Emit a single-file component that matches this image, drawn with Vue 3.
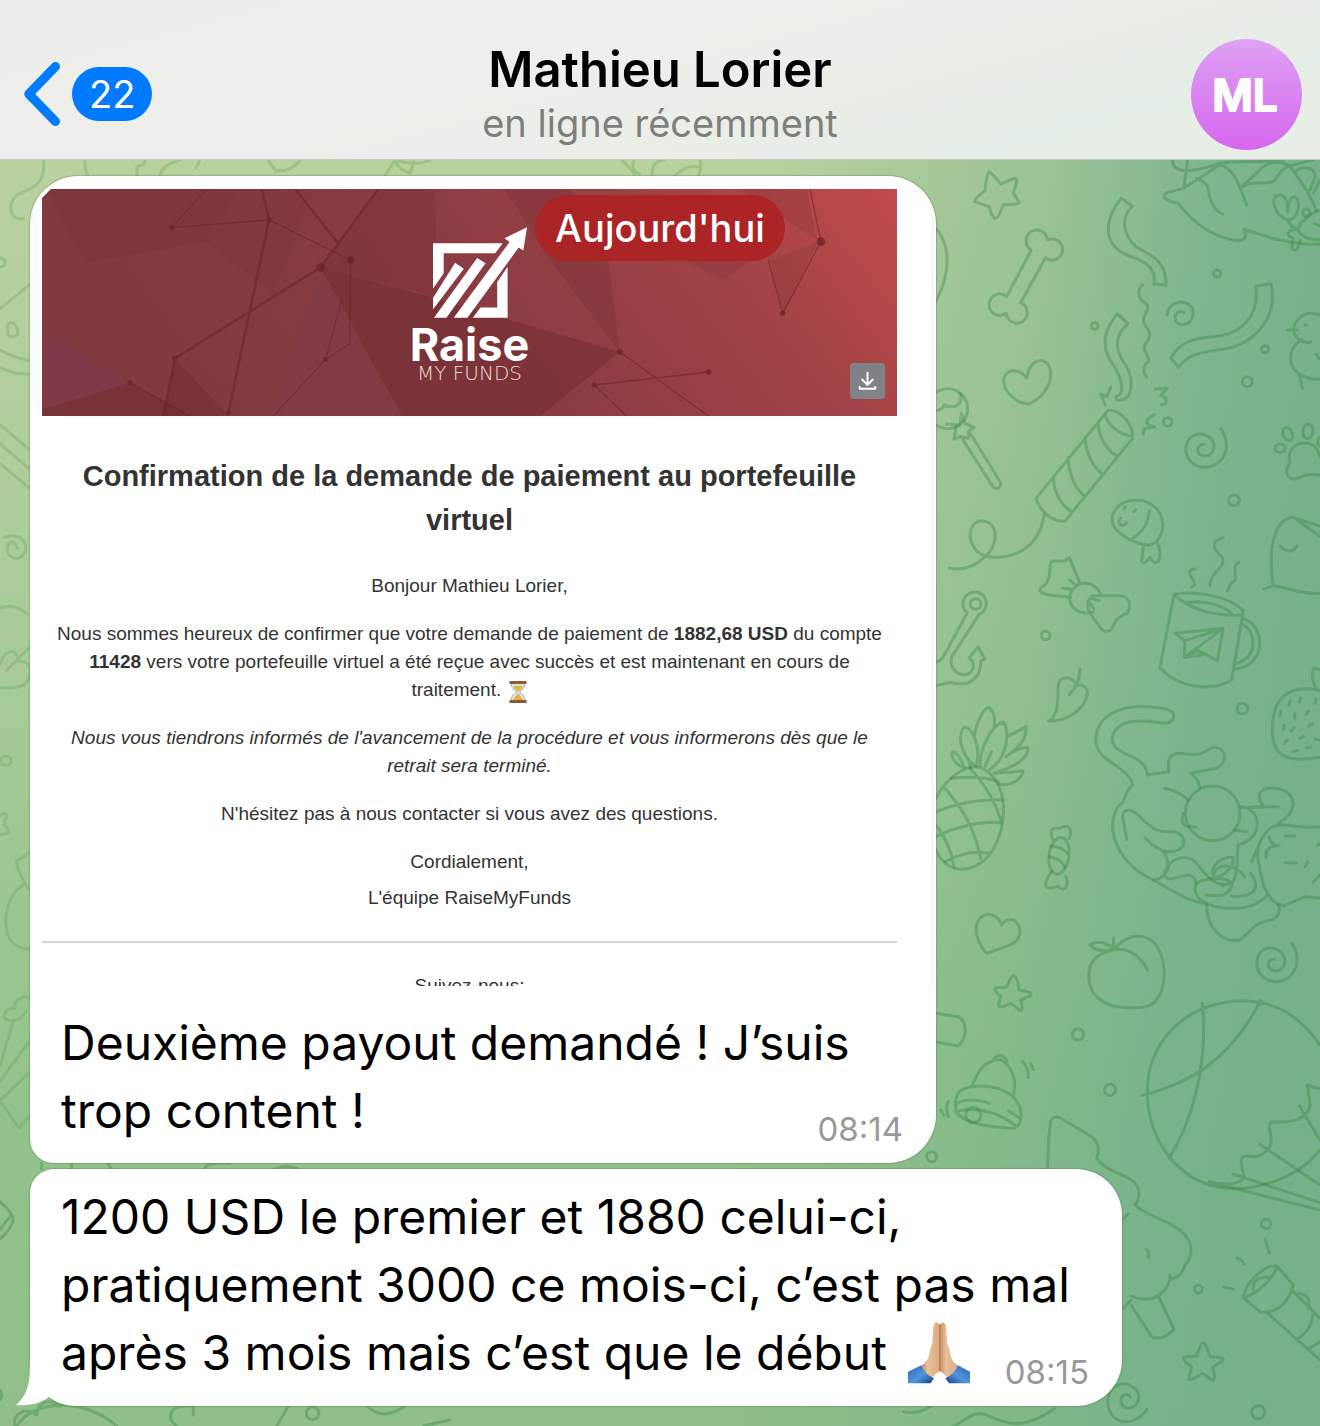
<script setup>
const contact = { name: 'Mathieu Lorier', status: 'en ligne récemment', initials: 'ML', unread: 22 }

const first = { lines: ['Deuxième payout demandé ! J’suis', 'trop content !'], time: '08:14' }
const second = {
  lines: ['1200 USD le premier et 1880 celui-ci,', 'pratiquement 3000 ce mois-ci, c’est pas mal', 'après 3 mois mais c’est que le début'],
  time: '08:15',
}

const seeds = [
  [1078, 430, 20], [1110, 420, 20], [1156, 424, 20], [1051, 460, 10], [1094, 468, 5], [1132, 458, 40],
  [1061, 503, 20], [1088, 508, 45], [1142, 496, 60], [1068, 545, 40], [1115, 532, 65], [1161, 538, 100],
  [1095, 573, 75], [1137, 562, 75],
]
</script>

<template>
  <div class="app">
    <header class="top">
      <button class="back" type="button" aria-label="Retour, 22 messages non lus">
        <svg class="chevron" viewBox="0 0 36 64" aria-hidden="true"><path d="M31.500 4.500 L4.800 32 L31.500 59.500" /></svg>
        <span class="unread">{{ contact.unread }}</span>
      </button>
      <div class="who">
        <h1>{{ contact.name }}</h1>
        <p>{{ contact.status }}</p>
      </div>
      <svg class="avatar" viewBox="0 0 111 111" role="img" aria-label="Mathieu Lorier">
        <defs>
          <linearGradient id="pink" x1="0" y1="0" x2="0" y2="1">
            <stop offset="0" stop-color="#dfa2f4" /><stop offset="1" stop-color="#d567ed" />
          </linearGradient>
        </defs>
        <circle cx="55.500" cy="55.500" r="55.500" fill="url(#pink)" />
        <text x="54" y="72" text-anchor="middle">{{ contact.initials }}</text>
      </svg>
    </header>

    <main class="chat">
      <svg class="wallpaper" viewBox="0 160 1320 1266" preserveAspectRatio="xMaxYMin slice" aria-hidden="true">
        <g transform="translate(930 160) scale(.33333)">
          <path d="M178 35 Q190 45 212 72 Q235 60 256 55 Q266 58 250 98 L268 128 Q262 134 220 134 Q205 176 195 176 Q185 170 178 140 L134 125 Q132 115 165 92 Q168 50 178 35Z" />
          <path d="M304 270 A32 32 0 1 1 352 240 A32 32 0 1 1 346 294 L272 428 A32 32 0 1 1 228 460 A32 32 0 1 1 230 410 Z" />
          <path d="M573 115 L607 138 C570 175 580 225 618 260 C660 285 710 300 708 376 L672 372 C680 325 645 305 610 292 C520 265 515 190 573 115Z" />
          <path d="M638 374 C620 390 625 415 640 425 C670 440 640 460 640 480 C640 500 670 510 655 540 C625 570 660 580 655 605 C635 620 640 640 650 652" />
          <path d="M562 462 L594 490 C560 520 550 560 580 605 C615 650 610 720 570 720 Q555 720 558 710 C590 700 575 650 540 600 C515 555 520 510 562 462Z" />
          <path d="M711 465 C715 430 750 418 775 432 C800 450 790 492 758 494 C730 492 728 460 750 455 Q757 453 762 458" />
          <path d="M977 378 L1023 371 C1045 460 985 550 880 568 C820 575 775 580 746 622 L722 595 C750 545 790 535 850 530 C930 525 990 470 977 378Z" />
          <circle cx="861" cy="340" r="11" /><circle cx="494" cy="498" r="10" /><circle cx="1005" cy="568" r="11" />
          <circle cx="952" cy="665" r="15" /><circle cx="713" cy="786" r="13" /><circle cx="912" cy="1021" r="16" />
          <path d="M290 655 C300 590 350 590 360 625 C370 670 340 710 300 731 C260 735 215 690 222 655 C230 625 270 625 290 655Z" />
          <circle cx="53" cy="746" r="60" />
          <path d="M18 752 Q40 750 42 735 C80 750 100 730 90 700 M98 838 L190 982 Q205 995 213 970 L122 822 M78 800 L72 838 L92 830 L115 835 L115 815 L132 802 L105 790 L94 760 L90 795 L50 792" />
          <path d="M535 750 L318 1015 C330 1055 365 1085 404 1084 L608 835 C610 790 570 750 535 750Z M524 760 C535 800 570 825 608 828 M505 788 C505 830 530 870 558 886 M466 832 C466 880 490 920 516 942 M415 892 C415 940 435 985 462 1008 M370 952 C372 1000 395 1035 424 1055" />
          <path d="M342 1065 C330 1160 250 1205 165 1188 C110 1170 105 1085 155 1082 C210 1085 205 1160 165 1190 C130 1225 95 1232 58 1224" />
          <path d="M526 735 L512 702 L530 710 L542 682 M675 687 L712 685 L692 706 Q712 712 708 730 L694 735 M674 764 Q640 780 655 795 L674 800 L642 806 L640 822" />
          <path d="M872 805 C910 860 880 920 825 922 C770 922 750 860 785 830 C815 810 855 830 852 865 C845 895 805 895 803 868 Q808 850 822 853" />
          <path d="M1170 465 C1120 445 1085 490 1092 515 C1095 535 1120 552 1142 546 M1115 540 C1060 570 1070 660 1170 658 M1072 510 h30 M1110 648 L1117 685 M1158 582 L1170 598 M1125 496 l3 0" />
          <ellipse cx="1073" cy="822" rx="14" ry="20" transform="rotate(-25 1073 822)" />
          <ellipse cx="1134" cy="814" rx="15" ry="22" transform="rotate(10 1134 814)" />
          <ellipse cx="1050" cy="865" rx="15" ry="13" />
          <path d="M1170 832 Q1155 845 1170 858 M1170 890 C1160 870 1165 860 1135 850 C1100 845 1070 865 1080 908 C1055 940 1080 968 1110 953 C1130 938 1150 945 1170 945" />
          <path d="M662 1155 C720 1130 710 1025 620 1020 C550 1022 530 1080 560 1110 C590 1140 630 1155 662 1155 M658 1052 C655 1095 635 1120 600 1140 M640 1160 L635 1205 Q645 1215 660 1192 Q672 1215 685 1203 C695 1180 688 1160 682 1147 M572 1074 a12 12 0 1 0 18 14 M582 1045 l4 -5 M612 1055 l5 -6" />
          <path d="M1030 1275 C1010 1150 1040 1075 1090 1072 L1170 1098 M1095 1075 L1170 1130 M1050 1158 Q1080 1190 1102 1157 M1002 1287 C1060 1260 1070 1305 1170 1300" />
          <path d="M868 15 L800 60 L760 85 L710 98 C690 110 710 125 745 130 C790 190 860 240 930 242 Q955 235 942 208 C1010 230 1080 255 1170 253 M868 15 C910 20 930 80 950 135 M800 55 C840 70 835 90 838 110 Q850 150 878 163 M728 0 C725 35 770 45 868 10 C900 0 1000 10 1060 0 M773 0 L762 80 M930 85 L1000 20 C1030 0 1060 5 1080 20 C1110 60 1140 100 1158 150 M930 85 C960 60 1000 75 1030 65 C1050 40 1060 20 1080 18 C1110 10 1140 0 1150 0 M1095 35 C1130 10 1165 30 1152 60 L1140 90 M1150 100 L1170 60" />
          <path d="M1073 155 C1075 95 1110 100 1105 145 Q1095 180 1073 180 C1030 165 1020 110 1045 105 Q1075 105 1073 155 M1170 150 C1130 165 1110 190 1103 210 Q1120 240 1170 240 M1075 185 L1085 200 L1103 205 L1080 213 Q1065 225 1090 235 L1085 265 Q1095 278 1105 260 L1110 240 M1153 190 L1170 198" />
          <circle cx="1129" cy="158" r="11" />
          <path d="M18 205 C65 260 60 340 18 425" />
        </g>
        <g transform="translate(930 560) scale(.33333)">
          <path d="M450 70 L418 -8 L405 3 L370 3 C350 10 370 50 345 75 Q328 85 330 92 C340 110 390 105 422 112 M485 107 L575 107 C600 110 605 145 590 160 C545 180 560 190 540 212 Q520 218 512 205 C490 170 465 150 475 125 Q480 110 495 107 M512 102 C490 55 430 60 418 112 C420 150 455 165 490 157 M420 60 L440 78 M398 85 L425 88 M485 115 L508 122 M480 130 L492 148" />
          <circle cx="137" cy="132" r="16" />
          <path d="M112 158 A35 35 0 1 1 148 163 L65 290 C55 330 90 350 115 342 C140 325 130 300 117 295 L144 260 L165 297 L152 303 C155 350 120 385 62 367 L18 377 M112 158 L40 290 Q35 302 18 306" />
          <circle cx="347" cy="226" r="13" /><circle cx="937" cy="446" r="16" />
          <path d="M450 328 C447 370 435 385 418 405 M438 372 C420 345 385 345 384 385 C385 440 380 470 355 483 C420 485 465 440 472 405 C475 380 455 370 438 378" />
          <path d="M110 625 C160 605 210 650 220 730 C225 830 180 920 100 928 C60 928 35 910 18 870 M110 625 Q50 650 18 715" />
          <path d="M140 620 C90 590 80 520 105 500 C135 510 150 570 140 610 M132 530 C140 480 165 440 178 443 C195 460 195 480 192 505 M150 618 C150 560 190 490 220 487 C240 510 235 590 180 628 M232 530 L288 500 C290 540 270 560 228 590 C250 570 280 560 294 563 C295 600 250 620 192 640 L280 633 C275 660 240 680 205 672 M105 622 C80 620 60 590 67 575 Q85 575 102 620 M185 575 L165 618 M115 600 L122 625" />
          <path d="M18 755 Q120 715 218 720 M18 830 Q120 780 215 788 M45 905 Q110 870 172 878 M65 655 Q150 645 205 665 M45 685 Q130 780 152 895 M18 795 Q60 850 72 920 M120 625 Q190 700 215 790" />
          <path d="M732 103 L690 322 C740 385 850 395 905 360 L940 152 C900 110 800 90 732 103 C780 150 860 170 935 165 M765 128 Q850 115 905 160 M940 175 C1010 200 1010 320 912 328 M935 192 C985 215 980 300 917 310 M735 220 L880 205 L862 302 L805 272 L763 292 L765 242Z M765 242 L880 205 L763 292 L830 283" />
          <path d="M795 27 C765 30 785 50 792 65 Q795 80 785 80 M880 -67 C840 -60 850 -30 875 -10 C895 20 835 40 840 77 M928 7 C905 15 920 40 915 60 Q900 70 892 93" />
          <path d="M1170 392 C1080 370 1020 410 1028 530 C1035 600 1090 605 1170 592 M1160 390 C1140 350 1145 310 1170 330" />
          <path v-for="s in seeds" :key="s[0]" d="M0 -7 V7" :transform="`translate(${s[0]} ${s[1]}) rotate(${s[2]})`" />
          <path d="M652 645 C650 580 540 590 547 530 C560 480 620 475 700 490 C740 490 740 455 710 448 C600 425 500 450 497 540 C500 610 590 610 608 675 C590 690 590 700 580 725 C520 770 540 900 670 960 M652 645 L717 635 C710 590 725 580 750 580 C820 590 820 575 850 562 C890 560 895 610 860 625 L782 640 Q810 660 808 685 M703 685 Q740 690 775 720" />
          <circle cx="848" cy="760" r="82" />
          <path d="M590 838 L578 770 C580 740 610 745 640 780 C680 820 700 815 730 815 C780 825 770 880 710 875 Q680 870 645 833 M700 875 C730 920 710 955 670 960 C760 1010 770 1020 830 1032 C920 1060 980 1040 1010 1008 M703 940 C720 890 770 880 800 910 C830 950 840 960 880 978 M703 940 C710 970 740 950 770 945 C800 950 800 960 795 990 Q800 1020 835 1032" />
          <path d="M800 970 C830 950 900 950 905 975 C900 1010 860 1010 828 1005 M850 950 C840 910 880 890 908 892 C915 920 880 950 850 955 C850 915 900 900 945 950 M905 1008 C960 1015 1000 990 962 940 M760 760 C750 790 760 805 798 800 M930 740 C990 740 1010 830 925 855 C920 880 925 920 915 950 Q910 980 875 970 M950 745 C960 740 980 740 1045 740 M1000 738 C970 700 1000 680 1040 685 C1110 700 1100 760 1045 790 M915 810 l35 5" />
          <path d="M1170 800 C1100 810 1060 780 1020 805 C980 840 975 880 990 925 M965 905 L985 860 M990 930 C1000 990 1020 1030 1060 1038 L1125 1010 L1170 1015 M1018 830 Q1020 855 1048 857 M1008 892 Q1005 855 1048 857 M1065 828 h30 M1065 908 h35 M1125 920 l8 -15 M1170 850 l-8 8 M1150 965 L1170 945" />
          <path d="M830 1032 C830 1110 880 1150 930 1140 C980 1100 960 1095 1030 1078 Q1055 1060 1045 1035" />
          <ellipse cx="387" cy="887" rx="30" ry="55" transform="rotate(8 387 887)" />
          <path d="M368 838 C355 810 370 800 390 805 C410 790 430 805 418 835 M365 935 C345 960 340 985 360 985 L385 978 C400 1000 420 980 408 950 M362 858 Q395 860 412 880 M358 890 Q390 895 405 920" />
          <path d="M215 1095 C200 1050 145 1055 138 1100 C138 1140 155 1165 170 1180 L240 1155 C275 1140 280 1100 250 1080 Q225 1075 215 1095Z" />
          <path d="M555 1165 C600 1110 680 1110 700 1210 C710 1270 690 1330 650 1340 C500 1360 470 1290 478 1230 C485 1180 560 1155 600 1175 Q635 1195 653 1230 M550 1133 L552 1165 M552 1168 Q500 1180 480 1155 Q510 1135 552 1165" />
          <path d="M1085 1150 C1120 1200 1095 1265 1035 1265 C970 1260 965 1180 1010 1165 C1050 1160 1075 1190 1060 1220 C1045 1240 1015 1235 1015 1210 Q1020 1195 1032 1198" />
        </g>
        <g transform="translate(930 960) scale(.33333)">
          <path d="M250 47 Q260 45 268 90 Q315 98 300 108 L272 120 Q282 155 268 150 L242 130 Q205 148 206 135 L212 108 Q188 92 198 83 L230 82 Q242 50 250 47Z" />
          <path d="M18 160 L85 170 Q105 180 106 215 Q100 245 85 258 L18 246" />
          <circle cx="444" cy="223" r="17" /><circle cx="540" cy="390" r="17" /><circle cx="5" cy="590" r="15" />
          <circle cx="1008" cy="792" r="14" /><circle cx="805" cy="987" r="12" /><circle cx="985" cy="1357" r="20" />
          <path d="M125 380 C150 320 165 305 210 298 C250 320 260 360 250 410 C285 450 278 505 245 505 C170 500 100 490 78 455 C70 400 90 385 125 380 Q200 370 250 410 M190 298 Q212 270 232 305 M80 430 Q120 410 178 430 M78 455 C130 440 200 450 260 500 M235 452 L270 475" />
          <circle cx="130" cy="465" r="23" />
          <path d="M278 305 Q300 330 294 353 M302 310 l8 18 M55 425 Q45 440 55 470 M33 450 l8 15" />
          <path d="M352 626 C355 580 355 520 362 485 Q368 465 390 473 L485 530 Q515 555 500 595 C540 650 625 640 627 700 Q625 725 615 735 C660 780 785 790 783 875 Q780 900 765 915 Q755 955 720 957 C705 1015 650 1030 603 1008 M603 1020 L577 1048 M603 1035 L665 1130 Q700 1145 732 1107 L685 1008 M595 762 L577 780 M650 868 Q660 878 655 893 M720 945 v14" />
          <path d="M1170 255 C1110 170 1040 122 930 122 C760 130 650 250 652 400 C655 560 760 660 860 680 C960 700 1100 660 1170 570 M817 130 C835 300 790 480 717 595 M992 122 C900 300 780 370 635 407" />
          <path d="M838 665 C900 680 950 670 940 640 C920 570 950 590 980 590 C1060 560 1000 500 1025 485 C1080 490 1140 480 1140 430 L1132 375 L1170 387 M1108 438 L1170 540 M988 552 L1170 675 M908 642 L1170 728 M845 668 L1170 750" />
          <path d="M1040 917 L1090 975 C1075 1030 1040 1060 992 1057 L940 1013 C945 970 1000 915 1040 917Z M1040 925 Q1010 985 945 1013 M970 990 Q965 950 1020 950 M1010 1057 L1170 1200 M1090 995 L1170 1075 M1105 1000 Q1145 1005 1135 1045 M1148 1065 Q1145 1110 1102 1138 M1170 1145 L1135 1168 M1005 837 l13 42 M920 893 Q935 898 943 913 M880 980 l30 8" />
          <path d="M820 1147 Q828 1150 840 1190 Q890 1192 878 1202 L848 1222 Q860 1265 846 1260 L818 1240 Q772 1268 777 1255 L785 1220 Q755 1200 762 1192 L800 1188 Q812 1150 820 1147Z" />
          <path d="M650 1348 C620 1400 540 1400 533 1330 C530 1270 600 1250 625 1300 C635 1345 580 1360 572 1325 C572 1300 600 1300 600 1312" />
          <path d="M70 1398 C110 1385 120 1350 170 1365 C240 1400 290 1405 375 1345 M-80 1355 Q-40 1365 0 1340" />
        </g>
        <g class="faint" transform="translate(0 160) scale(.33333 .6378)">
          <path d="M130 0 C140 40 90 45 50 55 C20 70 30 95 70 92 M0 153 Q20 157 15 163 Q10 168 0 167 M0 233 L90 195 M0 298 Q50 312 90 314 M0 325 Q50 338 90 335 M22 262 Q28 250 45 258 Q60 268 48 276 Q20 282 22 262Z M0 415 L90 455 M0 445 L90 485 M0 476 L90 515" />
          <path d="M12 592 C60 582 85 600 75 615 C60 632 15 625 22 605 Q38 592 52 608 M0 703 Q40 693 82 712 M0 790 C20 765 45 765 58 786 C95 785 100 805 75 822 Q40 830 0 827 M20 800 L90 763" />
          <ellipse cx="18" cy="942" rx="16" ry="7" />
          <path d="M0 1028 Q25 1020 18 1033 Q5 1040 22 1046 Q32 1058 18 1056 L0 1058 M90 1085 L48 1100 Q60 1125 90 1145 M75 1135 C0 1155 -10 1240 90 1237 M90 1313 C60 1310 40 1320 45 1330 C10 1330 5 1345 25 1349 C60 1350 65 1345 78 1335 M40 1350 L0 1420 M90 1380 L0 1445 M90 1430 L0 1475 L57 1518 L90 1498" />
        </g>
        <g transform="translate(0 1100) scale(.33333)">
          <path d="M0 305 Q40 340 40 360 Q35 385 0 417 M0 388 L30 350 M125 190 V207 M215 190 V207 M325 190 L333 207 M615 207 Q615 185 690 190 M825 207 Q860 190 895 207 M0 870 q10 15 0 30" />
          <path d="M50 978 C100 900 250 890 350 978 M45 978 C35 940 80 920 110 945 C110 910 150 890 180 920 M580 918 C500 910 500 960 530 978 M580 918 V945 M865 918 L830 978 M1100 918 Q1150 965 1215 918 M1270 978 Q1300 970 1350 960" />
          <circle cx="938" cy="940" r="19" />
        </g>
        <path class="faint" d="M85 160 Q84 168 88 176 M137 176 V166 Q145 166 145 160 M180 160 Q160 166 160 176 M200 160 l-4 8 M268 160 L276 171 Q292 172 300 160 M385 176 L395 160 M395 160 Q400 172 410 173 M414 160 L410 174 M430 160 Q420 166 398 161 M622 160 L635 174 M634 160 Q630 170 640 174 M652 176 Q652 160 665 160 M675 176 Q685 164 700 167 M700 160 Q702 170 698 176" />
      </svg>

      <p class="day">Aujourd'hui</p>

      <article class="bubble photo">
        <figure class="mail">
          <div class="banner">
            <svg class="mesh" viewBox="0 0 855 227" preserveAspectRatio="xMidYMid slice" aria-hidden="true">
              <defs>
                <linearGradient id="red" x1="0" y1="0.200" x2="1" y2="0">
                  <stop offset="0" stop-color="#803b40" /><stop offset=".42" stop-color="#893c42" />
                  <stop offset=".75" stop-color="#a14347" /><stop offset="1" stop-color="#c24a4a" />
                </linearGradient>
              </defs>
              <rect width="855" height="227" fill="url(#red)" />
              <g transform="translate(-12 -19) scale(.33333)">
                <g fill="#6a272c" fill-opacity=".45">
                  <path d="M50 57 L165 277 L525 215 L630 57Z" opacity=".45" />
                  <path d="M38 718 L300 638 L480 738 H38Z" opacity=".8" />
                  <path d="M435 565 L400 738 H595Z" opacity=".8" />
                  <path d="M872 292 L1200 380 L1770 546 L1530 738 H1115Z" />
                  <path d="M872 292 L1045 57 L1215 57 L1222 380Z" opacity=".5" />
                  <path d="M525 215 L735 375 L850 57 L630 57Z" opacity=".3" />
                  <path d="M1425 57 L1560 270 L1770 546 L1735 270 L1620 57Z" opacity=".6" />
                  <path d="M2130 57 L2360 210 L2330 57Z" opacity=".4" />
                  <path d="M2220 270 L2260 430 L2365 215Z" opacity=".35" />
                  <path d="M1960 270 L2080 330 L2160 270Z" opacity=".4" />
                </g>
                <path d="M872 292 L720 738 L1110 738Z" fill="#7a3a55" fill-opacity=".25" />
                <path d="M38 480 L300 638 L38 718Z" fill="#7a3a55" fill-opacity=".4" />
                <g fill="none" stroke="#6d2529" stroke-opacity=".6" stroke-width="6">
                  <path d="M1045 57 L872 292 L435 565 L400 738 M695 57 L717 150 L595 730 M795 57 L925 220" stroke-width="8" />
                  <path d="M425 173 L717 150 L962 270 L960 520 L887 568 L935 390 M887 568 L730 738 M425 173 L530 57 M300 638 L480 738 M1770 546 L2035 738 M1692 645 L2036 606 M1692 645 L1790 738 M2215 270 L2258 430 L2373 215 L2340 57" stroke-width="4" />
                </g>
                <g fill="#6d2529" fill-opacity=".8">
                  <circle cx="872" cy="292" r="13" /><circle cx="435" cy="565" r="9" /><circle cx="425" cy="173" r="8" />
                  <circle cx="717" cy="150" r="8" /><circle cx="962" cy="270" r="12" /><circle cx="887" cy="568" r="8" />
                  <circle cx="300" cy="638" r="8" /><circle cx="595" cy="728" r="8" /><circle cx="1770" cy="546" r="9" />
                  <circle cx="1692" cy="645" r="8" /><circle cx="2036" cy="606" r="8" /><circle cx="2258" cy="430" r="8" /><circle cx="2373" cy="215" r="13" />
                </g>
              </g>
            </svg>
            <div class="brand">
              <svg class="mark" viewBox="114 22 281 274" aria-hidden="true">
                <path d="M114 70 H322 L300 100 H146 V160 L114 206Z M337 140 V293 H233 L256 262 H306 V186Z" />
                <path d="M114 234 L180 128 L206 146 L114 268Z M117 293 L246 114 L271 130 L154 293Z M176 293 L343 66 L328 55 L395 22 L384 92 L370 83 L217 293Z" />
              </svg>
              <strong>Raise</strong>
              <span>MY FUNDS</span>
            </div>
            <button class="download" type="button" aria-label="Télécharger">
              <svg viewBox="0 0 36 36" aria-hidden="true"><path d="M18 9 V21 M12.500 16 L18 21.500 L23.500 16 M10 23.500 V25.500 H26 V23.500" /></svg>
            </button>
          </div>
          <div class="letter">
            <h2>Confirmation de la demande de paiement au portefeuille virtuel</h2>
            <p>Bonjour Mathieu Lorier,</p>
            <p>
              Nous sommes heureux de confirmer que votre demande de paiement de <b>1882,68 USD</b> du compte
              <b>11428</b> vers votre portefeuille virtuel a été reçue avec succès et est maintenant en cours de
              traitement.
              <svg class="hourglass" viewBox="0 0 20 24" role="img" aria-label="⏳">
                <path d="M3 3 H17 C17 9 13 10 11.500 12 C13 14 17 15 17 21 H3 C3 15 7 14 8.500 12 C7 10 3 9 3 3Z" fill="#d5e4e8" stroke="#9fb4ba" stroke-width="1" />
                <path d="M5 6 H15 Q14 9 10 12 Q6 9 5 6Z M10 13 L15 20 H5Z" fill="#e8b437" />
                <path d="M1.500 1 H18.500 V4 H1.500Z M1.500 20 H18.500 V23 H1.500Z" fill="#8c5a3b" />
              </svg>
            </p>
            <p><i>Nous vous tiendrons informés de l'avancement de la procédure et vous informerons dès que le retrait sera terminé.</i></p>
            <p>N'hésitez pas à nous contacter si vous avez des questions.</p>
            <p class="bye">Cordialement,</p>
            <p>L'équipe RaiseMyFunds</p>
          </div>
          <hr />
          <p class="follow">Suivez-nous:</p>
        </figure>
        <p class="text"><span v-for="line in first.lines" :key="line">{{ line }}</span></p>
        <time>{{ first.time }}</time>
      </article>

      <article class="bubble last">
        <svg class="tail" viewBox="0 0 60 46" aria-hidden="true"><path d="M14 0 V8 C14 24 10 37 0 45 C14 46 26 43 34 36 V0Z" /></svg>
        <p class="text">
          <span v-for="(line, i) in second.lines" :key="line">{{ line }}<template v-if="i === 2">&nbsp;<svg class="pray" viewBox="174 66 186 184" role="img" aria-label="🙏🏼">
            <defs>
              <linearGradient id="cuffL" x1="0" y1="0" x2="1" y2="1"><stop offset="0" stop-color="#2c62ae" /><stop offset=".55" stop-color="#4f97e0" /><stop offset="1" stop-color="#123a7d" /></linearGradient>
              <linearGradient id="cuffR" x1="1" y1="0" x2="0" y2="1"><stop offset="0" stop-color="#2c62ae" /><stop offset=".55" stop-color="#4f97e0" /><stop offset="1" stop-color="#123a7d" /></linearGradient>
              <linearGradient id="palm" x1="0" y1="0" x2="1" y2="0"><stop offset="0" stop-color="#c98b60" /><stop offset=".35" stop-color="#e6c19b" /><stop offset="1" stop-color="#dba97f" /></linearGradient>
            </defs>
            <path d="M269 72 Q254 58 250 80 L247 128 L240 150 Q236 185 214 196 L234 236 Q250 232 255 222 L269 212Z" fill="url(#palm)" />
            <path d="M269 72 Q284 58 288 80 L292 128 L299 150 Q302 185 324 196 L304 236 Q288 232 283 222 L269 212Z" fill="url(#palm)" />
            <path d="M269 73 V212" fill="none" stroke="#b3704a" stroke-width="3" />
            <path d="M174 214 L214 195 Q224 222 252 234 L242 249 H174Z" fill="url(#cuffL)" />
            <path d="M360 214 L324 195 Q314 222 286 234 L297 249 H360Z" fill="url(#cuffR)" />
          </svg></template></span>
        </p>
        <time>{{ second.time }}</time>
      </article>
    </main>
  </div>
</template>

<style>
body { margin: 0; }
</style>

<style scoped>
.app {
  min-height: 100vh;
  display: flex;
  flex-direction: column;
  font-family: Inter, "Liberation Sans", sans-serif;
  color: #000;
}
h1, h2, p, figure { margin: 0; }
button { border: 0; padding: 0; cursor: pointer; font: inherit; }

.top {
  display: grid;
  grid-template-columns: 1fr auto 1fr;
  align-items: center;
  min-height: 130px;
  padding: 29px 18px 0;
  background: linear-gradient(165deg, #edeeea 0%, #eeefea 40%, #e9eee7 65%, #e5eee6 80%, #e8eee5 100%);
  border-bottom: 1px solid #c4c9c6;
}
.back { display: flex; align-items: center; gap: 12px; justify-self: start; margin-left: 6px; background: none; }
.chevron { width: 36px; height: 64px; fill: none; stroke: #007aff; stroke-width: 9; stroke-linecap: round; stroke-linejoin: round; }
.unread { padding: 0 17px; border-radius: 27px; background: #007aff; color: #fff; font-size: 38px; line-height: 54px; }
.who { text-align: center; }
h1 { font-size: 49px; font-weight: 600; line-height: 60px; }
.who p { font-size: 38px; line-height: 46px; padding-bottom: 2px; color: #7e7f7d; }
.avatar { width: 111px; height: 111px; justify-self: end; }
.avatar text { font-size: 44px; font-weight: 600; fill: #fff; stroke: #fff; stroke-width: 2px; stroke-linejoin: round; }

.chat {
  position: relative;
  flex: 1;
  display: flex;
  flex-direction: column;
  gap: 6px;
  padding: 16px 30px 20px;
  background:
    linear-gradient(93deg, rgba(116, 176, 138, 0) 55%, rgba(116, 176, 138, .45) 76%, rgba(116, 176, 138, .85) 88%, #77b189 97%),
    linear-gradient(180deg, #b9d19f 0%, #a8cb99 40%, #93c38c 75%, #90c088 100%);
}
.wallpaper { position: absolute; inset: 0; width: 100%; height: 100%; fill: none; stroke: rgba(50, 130, 65, .36); stroke-width: 3; stroke-linecap: round; stroke-linejoin: round; }
.wallpaper :is(path, circle, ellipse) { vector-effect: non-scaling-stroke; }
.faint { stroke: rgba(80, 150, 60, .25); }

.day {
  position: absolute;
  z-index: 2;
  top: 35px;
  left: 50%;
  transform: translateX(-50%);
  padding: 0 20px;
  border-radius: 33px;
  background: rgba(172, 34, 36, .94);
  color: #fff;
  font-size: 38px;
  font-weight: 500;
  line-height: 66px;
}

.bubble { position: relative; box-sizing: border-box; width: 100%; background: #fff; box-shadow: 0 0 1px 1px rgba(80, 130, 70, .35); }
.photo { max-width: 906px; border-radius: 48px 48px 48px 24px; padding-bottom: 18px; }
.last { max-width: 1092px; border-radius: 24px 46px 46px 46px; padding: 14px 0 19px; }
.text { position: relative; padding: 0 31px; font-size: 48px; line-height: 68px; }
.text span { display: block; }
.photo .text { padding-top: 23px; }
time { position: absolute; right: 33px; bottom: 14px; font-size: 33px; line-height: 40px; color: #999; }
.tail { position: absolute; left: -14px; bottom: 0; width: 60px; height: 46px; fill: #fff; }
.pray { width: 62px; height: 62px; margin-left: 8px; vertical-align: -14px; }

.mail {
  height: 810px;
  box-sizing: border-box;
  overflow: hidden;
  padding: 13px 39px 0 12px;
  border-radius: 48px 48px 0 0;
  background: linear-gradient(#f7f7f7, #f7f7f7) right 2px top 0 / 3px 100% no-repeat;
  font-family: "Liberation Sans", Arial, sans-serif;
  font-size: 19px;
  line-height: 28px;
  color: #333;
  text-align: center;
}
.banner { position: relative; display: flex; justify-content: center; height: 227px; overflow: hidden; clip-path: polygon(9px 0, 100% 0, 100% 100%, 0 100%, 0 9px); }
.mesh { position: absolute; inset: 0; width: 100%; height: 100%; }
.brand { position: relative; display: flex; flex-direction: column; align-items: center; padding-top: 38px; color: #fff; font-family: Inter, sans-serif; }
.mark { width: 94px; height: 92px; margin-left: 22px; fill: #fff; }
.brand strong { padding-top: 6px; font-size: 45px; font-weight: 700; line-height: 40px; }
.brand span { font-family: "DejaVu Sans", sans-serif; font-weight: 200; font-size: 20px; line-height: 16px; color: #f0dcdc; }
.download { position: absolute; right: 12px; bottom: 17px; width: 35px; height: 36px; border-radius: 4px; background: #7f8286; }
.download svg { display: block; width: 100%; fill: none; stroke: #fff; stroke-width: 2; stroke-linecap: round; stroke-linejoin: round; }
.letter { display: flex; flex-direction: column; gap: 20px; padding: 38px 12px 29px; }
h2 { padding-bottom: 10px; font-size: 29px; line-height: 44px; }
.bye { margin-bottom: -12px; }
.hourglass { width: 20px; height: 24px; margin-left: 1px; vertical-align: -8px; }
hr { margin: 0; border: 0; border-top: 2px solid #d6d6d6; }
.follow { padding-top: 29px; }
</style>
